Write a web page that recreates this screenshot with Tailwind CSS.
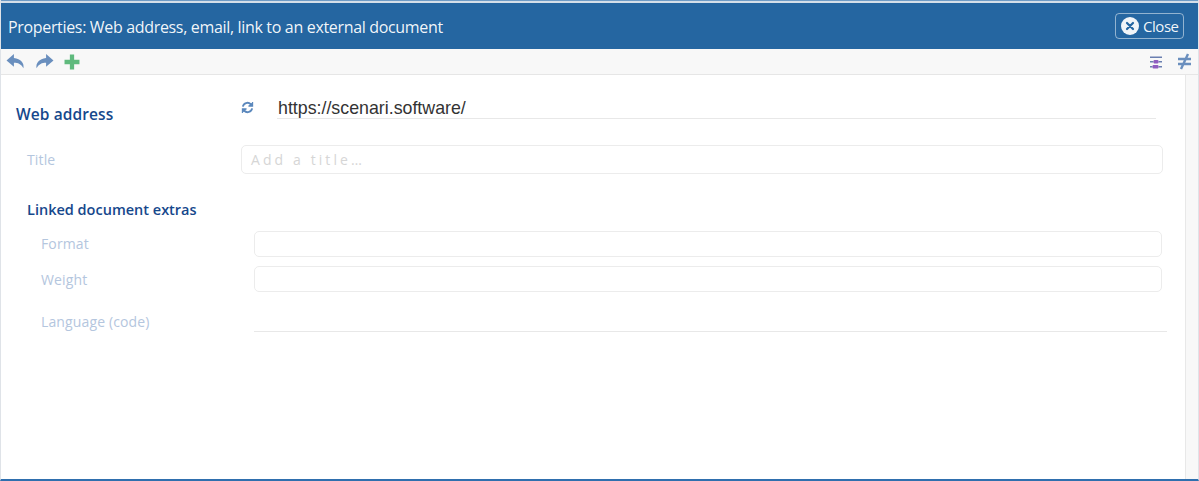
<!DOCTYPE html>
<html lang="en">
  <head>
    <meta charset="UTF-8" />
    <title>Properties</title>
    <script src="https://cdn.jsdelivr.net/npm/@tailwindcss/browser@4"></script>
  </head>
  <body class="h-[481px] w-[1199px] overflow-hidden bg-white font-['Open_Sans',sans-serif]">
    <div class="flex h-full flex-col border-x border-b-2 border-[#dfe3e8] border-b-[#2f6fae]">
      <!-- title bar -->
      <div class="shrink-0 border-t border-t-[#6f9bc5]">
        <div class="h-[2px] bg-[#d5dfe9]"></div>
        <div class="flex h-[46px] items-center justify-between bg-[#2566a1] pr-[14px] pl-[7px] text-white/95">
          <h1 class="pt-[2px] text-[16px] tracking-[-0.33px]">Properties: Web address, email, link to an external document</h1>
          <button class="flex h-[26px] w-[69px] items-center gap-[4px] rounded-[4px] border border-white/50 pl-[5px] text-[15px] tracking-[-0.45px]">
            <svg class="h-[18px] w-[18px]" viewBox="0 0 18 18">
              <circle cx="9" cy="9" r="9" fill="#f2f5f8" />
              <path d="M6 6l6 6M12 6l-6 6" stroke="#2566a1" stroke-width="2.2" stroke-linecap="round" />
            </svg>
            <span>Close</span>
          </button>
        </div>
      </div>
      <!-- toolbar -->
      <div class="flex h-[26px] shrink-0 items-center justify-between border-b border-[#e6e6e6] bg-[#f8f8f8] pr-[7px] pl-[5px]">
        <div class="flex items-center gap-[10px]">
          <svg class="h-[17px] w-[19px]" viewBox="0 0 18 16"><path d="M7.500 1L0.500 7l7 6V9.300c4 0 6.800 1.200 9 5.200 1-5-2.500-9-9-9.800z" fill="#6a8fbe" /></svg>
          <svg class="h-[17px] w-[19px]" viewBox="0 0 18 16"><path d="M10.500 1l7 6-7 6V9.300c-4 0-6.800 1.200-9 5.200-1-5 2.500-9 9-9.800z" fill="#6a8fbe" /></svg>
          <svg class="h-[16px] w-[16px]" viewBox="0 0 15 15"><path d="M5.500 0.500h4v5h5v4h-5v5h-4v-5h-5v-4h5z" fill="#5fba7d" /></svg>
        </div>
        <div class="flex items-center gap-[15px]">
          <svg class="h-[14px] w-[14px]" viewBox="0 0 14 14">
            <path d="M1 1.500h12V3H1zM1 6h3.500v1.500H1zM9.500 6H13v1.500H9.500zM1 11h2.500v1.500H1zM9.500 11H13v1.500H9.500z" fill="#6a7fb0" />
            <rect x="4.500" y="5" width="5" height="3.500" rx="1" fill="#8f5cc0" />
            <rect x="3.500" y="10" width="6" height="3.500" rx="1" fill="#8f5cc0" />
          </svg>
          <svg class="h-[17px] w-[13px]" viewBox="0 0 13 17">
            <path d="M0 6h13M0 11h13M10 1L3 16" stroke="#6a8fbe" stroke-width="2.400" fill="none" />
          </svg>
        </div>
      </div>
      <div class="flex flex-1">
        <!-- form -->
        <div class="flex-1 text-[14px] tracking-[0.13px] text-[#b4c6de]">
          <div class="flex h-[70px] pl-[15px]">
            <div class="w-[225px] pt-[28px] text-[15.500px] font-semibold tracking-[0.1px] text-[#16488c]">Web address</div>
            <div class="flex h-[44px] flex-1 items-end">
              <svg class="mb-[5px] h-[13px] w-[13px]" viewBox="0 0 14 14" fill="none" stroke="#5b88bd" stroke-width="2">
                <path d="M2 6a5 5 0 0 1 8.500-2.500L12 5M12 8a5 5 0 0 1-8.500 2.500L2 9" />
                <path d="M12.500 1v4.500H8M1.500 13V8.500H6" stroke-width="1.200" fill="#5b88bd" />
              </svg>
              <div class="mr-[29px] ml-[23px] flex h-[28px] flex-1 items-end border-b border-[#e8e8e8] pl-[1px] font-['Liberation_Sans',sans-serif] text-[17.800px] leading-[20px] tracking-normal text-[#333333]">https://scenari.software/</div>
            </div>
          </div>
          <div class="flex h-[29px] items-center pr-[22px] pl-[26px]">
            <label class="w-[214px]">Title</label>
            <div class="flex h-full flex-1 items-center rounded-[5px] border border-[#ececec] pl-[9px] tracking-[3.100px] text-[#d6d6d6]">Add a title…</div>
          </div>
          <div class="pt-[25px] pl-[26px] text-[14.500px] font-semibold tracking-normal text-[#16488c]">Linked document extras</div>
          <div class="mt-[10px] flex h-[26px] items-center pr-[23px] pl-[40px]">
            <label class="w-[213px]">Format</label>
            <div class="h-full flex-1 rounded-[5px] border border-[#ececec]"></div>
          </div>
          <div class="mt-[9px] flex h-[26px] items-center pr-[23px] pl-[40px]">
            <label class="w-[213px] pt-[2px]">Weight</label>
            <div class="h-full flex-1 rounded-[5px] border border-[#ececec]"></div>
          </div>
          <div class="mt-[17px] flex h-[23px] items-center pr-[18px] pl-[40px]">
            <label class="w-[213px] pt-[3px]">Language (code)</label>
            <div class="h-full flex-1 border-b border-[#e8e8e8]"></div>
          </div>
        </div>
        <!-- scrollbar track -->
        <div class="w-[13px] shrink-0 border-l border-[#e8e8e8] bg-[#f8f8f8]"></div>
      </div>
    </div>
  </body>
</html>
